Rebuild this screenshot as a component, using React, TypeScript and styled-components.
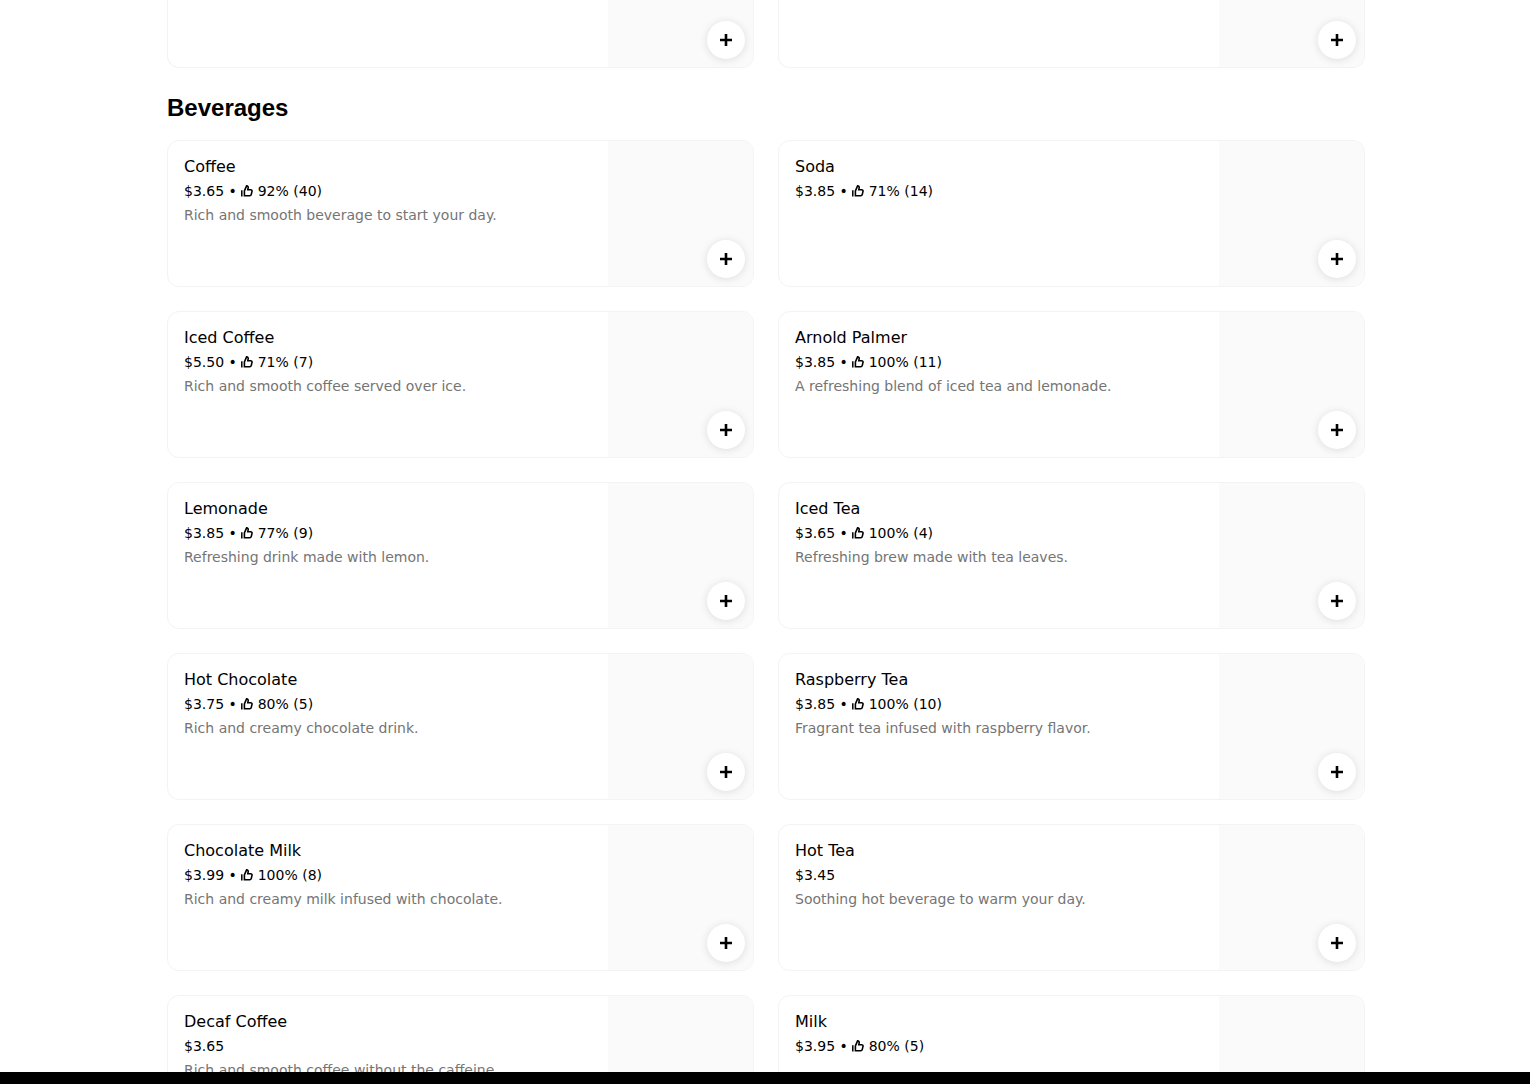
import React from 'react';
import styled, {createGlobalStyle} from 'styled-components';

type MenuItem = {
  name: string;
  price: string;
  rating?: string;
  description?: string;
};

const BEVERAGES: MenuItem[] = [
  {
    name: 'Coffee',
    price: '$3.65',
    rating: '92% (40)',
    description: 'Rich and smooth beverage to start your day.',
  },
  {name: 'Soda', price: '$3.85', rating: '71% (14)'},
  {
    name: 'Iced Coffee',
    price: '$5.50',
    rating: '71% (7)',
    description: 'Rich and smooth coffee served over ice.',
  },
  {
    name: 'Arnold Palmer',
    price: '$3.85',
    rating: '100% (11)',
    description: 'A refreshing blend of iced tea and lemonade.',
  },
  {
    name: 'Lemonade',
    price: '$3.85',
    rating: '77% (9)',
    description: 'Refreshing drink made with lemon.',
  },
  {
    name: 'Iced Tea',
    price: '$3.65',
    rating: '100% (4)',
    description: 'Refreshing brew made with tea leaves.',
  },
  {
    name: 'Hot Chocolate',
    price: '$3.75',
    rating: '80% (5)',
    description: 'Rich and creamy chocolate drink.',
  },
  {
    name: 'Raspberry Tea',
    price: '$3.85',
    rating: '100% (10)',
    description: 'Fragrant tea infused with raspberry flavor.',
  },
  {
    name: 'Chocolate Milk',
    price: '$3.99',
    rating: '100% (8)',
    description: 'Rich and creamy milk infused with chocolate.',
  },
  {
    name: 'Hot Tea',
    price: '$3.45',
    description: 'Soothing hot beverage to warm your day.',
  },
  {
    name: 'Decaf Coffee',
    price: '$3.65',
    description: 'Rich and smooth coffee without the caffeine.',
  },
  {name: 'Milk', price: '$3.95', rating: '80% (5)'},
];

const GlobalStyle = createGlobalStyle`
  body {
    margin: 0;
    background: #fff;
    color: #000;
    font-family: 'DejaVu Sans', sans-serif;
    overflow: hidden;
  }

  * {
    box-sizing: border-box;
  }
`;

const Screen = styled.div({
  display: 'flex',
  flexDirection: 'column',
  height: 1084,
});

const Menu = styled.main({
  flex: 1,
  minHeight: 0,
  overflow: 'hidden',
  padding: '0 165px 0 167px',
});

const BottomBar = styled.footer({
  flexShrink: 0,
  height: 12,
  background: '#000',
});

const Heading = styled.h2({
  margin: '24px 0 16px',
  fontFamily: "'Liberation Sans', sans-serif",
  fontSize: 24,
  fontWeight: 700,
  lineHeight: '32px',
});

const Grid = styled.div({
  display: 'grid',
  gridTemplateColumns: '1fr 1fr',
  gap: 24,
});

const Card = styled.article<{$cut?: boolean}>`
  position: relative;
  display: flex;
  height: ${({$cut}) => ($cut ? 68 : 147)}px;
  border: 1px solid #f3f3f3;
  border-top-width: ${({$cut}) => ($cut ? 0 : 1)}px;
  border-radius: ${({$cut}) => ($cut ? '0 0 12px 12px' : '12px')};
  overflow: hidden;
`;

const Info = styled.div({
  flex: 1,
  minWidth: 0,
  padding: '14px 16px',
});

const Thumbnail = styled.div({
  flexShrink: 0,
  width: 145,
  background: '#fafafa',
});

const Name = styled.div({
  fontSize: 16,
  lineHeight: '24px',
});

const Meta = styled.div({
  display: 'flex',
  alignItems: 'center',
  marginTop: 2,
  fontSize: 14,
  lineHeight: '20px',
  whiteSpace: 'pre',
});

const Description = styled.div({
  marginTop: 4,
  color: '#757575',
  fontSize: 14,
  lineHeight: '20px',
  whiteSpace: 'nowrap',
});

const AddButton = styled.button({
  position: 'absolute',
  right: 8,
  bottom: 8,
  display: 'flex',
  alignItems: 'center',
  justifyContent: 'center',
  width: 38,
  height: 38,
  padding: 0,
  border: 0,
  borderRadius: '50%',
  background: '#fff',
  boxShadow: '0 1px 8px rgba(0, 0, 0, 0.12)',
});

const ThumbUp = () => (
  <svg width="12" height="12" viewBox="0 0 12 12" fill="none">
    <path d="M.8 5.3V11.5" stroke="#000" strokeWidth="1.5" />
    <path
      d="M3.4 10.7V5.9L5.6 .9C6.8 .9 7.4 1.7 7.2 2.7L6.8 4.7H9.6C10.6 4.7 11.2 5.4 11 6.3L10.3 9.4C10.1 10.3 9.5 10.7 8.7 10.7Z"
      stroke="#000"
      strokeWidth="1.6"
    />
  </svg>
);

const Add = () => (
  <AddButton aria-label="Add">
    <svg width="12" height="12" viewBox="0 0 12 12">
      <path d="M6 0V12M0 6H12" stroke="#000" strokeWidth="2.6" />
    </svg>
  </AddButton>
);

const ItemCard = ({item}: {item: MenuItem}) => (
  <Card>
    <Info>
      <Name>{item.name}</Name>
      <Meta>
        {item.price}
        {item.rating && (
          <>
            {' • '}
            <ThumbUp />
            {` ${item.rating}`}
          </>
        )}
      </Meta>
      {item.description && <Description>{item.description}</Description>}
    </Info>
    <Thumbnail />
    <Add />
  </Card>
);

// End of the section above, already scrolled past its text
const ScrolledCard = () => (
  <Card $cut>
    <Info />
    <Thumbnail />
    <Add />
  </Card>
);

export default function App() {
  return (
    <Screen>
      <GlobalStyle />
      <Menu>
        <Grid>
          <ScrolledCard />
          <ScrolledCard />
        </Grid>
        <Heading>Beverages</Heading>
        <Grid>
          {BEVERAGES.map(item => (
            <ItemCard key={item.name} item={item} />
          ))}
        </Grid>
      </Menu>
      <BottomBar />
    </Screen>
  );
}
